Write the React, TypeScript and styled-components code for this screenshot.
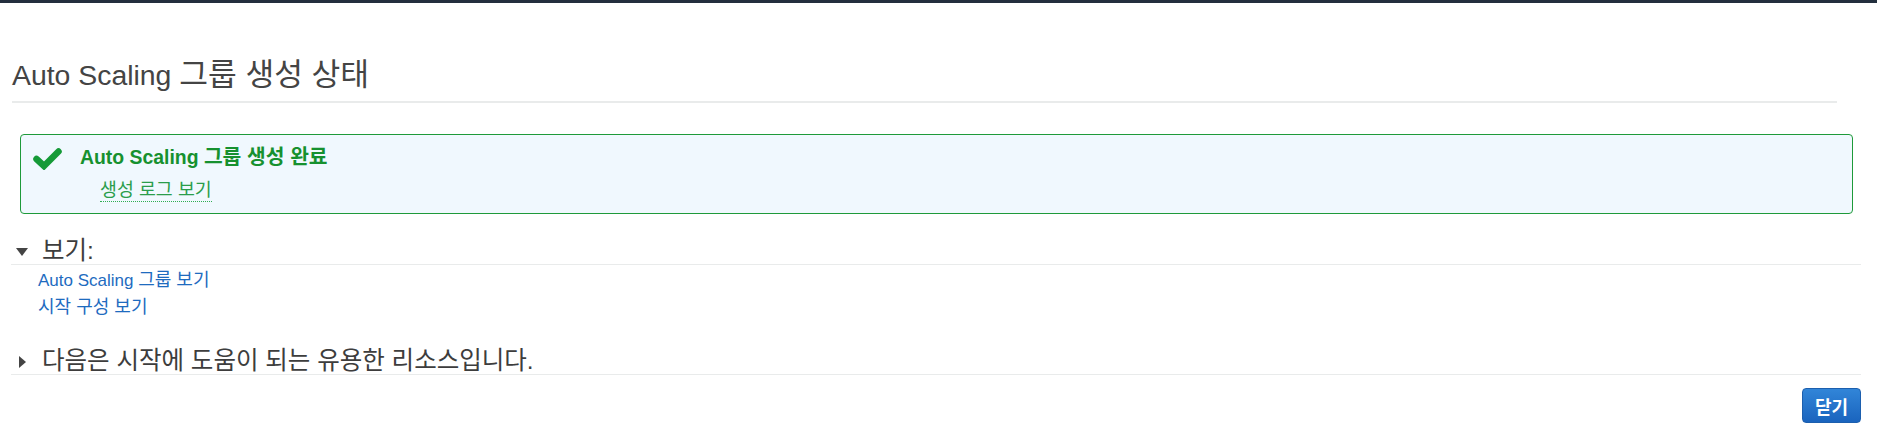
import React from "react";
import styled, { createGlobalStyle } from "styled-components";

const GlobalStyle = createGlobalStyle`
  body {
    margin: 0;
    background: #ffffff;
    font-family: "Liberation Sans", "Noto Sans CJK KR", sans-serif;
    color: #444444;
  }
`;

const CheckIcon = () => (
  <svg width="29" height="23" viewBox="0 0 29 23">
    <path
      d="M3.5 12 L11 19 L25.5 4.5"
      fill="none"
      stroke="#159a37"
      strokeWidth="6.5"
      strokeLinecap="round"
      strokeLinejoin="miter"
    />
  </svg>
);

const App = () => {
  return (
    <>
      <GlobalStyle />
      <TopBar />
      <Page>
        <Title>
          Auto Scaling <Hangul $scale={1.1}>그룹 생성 상태</Hangul>
        </Title>

        <Alert>
          <IconBox>
            <CheckIcon />
          </IconBox>
          <AlertBody>
            <AlertTitle>
              Auto Scaling <Hangul $scale={1.05}>그룹 생성 완료</Hangul>
            </AlertTitle>
            <LogRow>
              <LogLink href="#">생성 로그 보기</LogLink>
            </LogRow>
          </AlertBody>
        </Alert>

        <SectionHeader $gap={24}>
          <Arrow>
            <Caret $open />
          </Arrow>
          보기:
        </SectionHeader>
        <LinkList>
          <ViewLink href="#">
            Auto Scaling <Hangul $scale={1.06}>그룹 보기</Hangul>
          </ViewLink>
          <ViewLink href="#">
            <Hangul $scale={1.06}>시작 구성 보기</Hangul>
          </ViewLink>
        </LinkList>

        <SectionHeader $gap={27}>
          <Arrow>
            <Caret />
          </Arrow>
          다음은 시작에 도움이 되는 유용한 리소스입니다.
        </SectionHeader>

        <Footer>
          <CloseButton type="button">닫기</CloseButton>
        </Footer>
      </Page>
    </>
  );
};

const TopBar = styled.div`
  height: 3px;
  background-color: #232f3e;
`;

const Page = styled.div`
  padding: 0 16px 0 11px;
`;

const Hangul = styled.span<{ $scale: number }>`
  font-size: ${(p) => p.$scale}em;
`;

const Title = styled.h1`
  margin: 0 24px 0 1px;
  padding: 55px 0 9px;
  font-size: 28.4px;
  line-height: 34px;
  font-weight: normal;
  color: #444444;
  border-bottom: 2px solid #e9ebeb;
`;

const Alert = styled.div`
  display: flex;
  margin: 31px 8px 0 9px;
  padding: 10px 12px 11px;
  border: 1px solid #1e9a3a;
  border-radius: 4px;
  background-color: #f0f8fe;
`;

const IconBox = styled.div`
  width: 29px;
  margin: 2px 18px 0 0;
  flex-shrink: 0;
`;

const AlertBody = styled.div`
  display: flex;
  flex-direction: column;
`;

const AlertTitle = styled.div`
  font-size: 19.4px;
  line-height: 24px;
  font-weight: bold;
  color: #16912f;
`;

const LogRow = styled.div`
  margin-top: 10px;
  padding-left: 20px;
`;

const LogLink = styled.a`
  display: inline-block;
  font-size: 18.4px;
  line-height: 21px;
  padding-bottom: 1px;
  color: #2a9d4b;
  text-decoration: none;
  border-bottom: 1px dotted #2fae52;
`;

const SectionHeader = styled.div<{ $gap: number }>`
  display: flex;
  align-items: center;
  margin-top: ${(p) => p.$gap}px;
  padding-left: 5px;
  font-size: 24.5px;
  line-height: 26px;
  color: #3d3d3d;
  border-bottom: 1px solid #e9ebeb;
`;

const Arrow = styled.span`
  display: flex;
  align-items: center;
  justify-content: center;
  width: 12px;
  height: 26px;
  margin-right: 14px;
`;

const Caret = styled.span<{ $open?: boolean }>`
  width: 0;
  height: 0;
  ${(p) =>
    p.$open
      ? `
    border-left: 6px solid transparent;
    border-right: 6px solid transparent;
    border-top: 8px solid #444444;
    margin-top: 2px;
  `
      : `
    border-top: 6px solid transparent;
    border-bottom: 6px solid transparent;
    border-left: 7px solid #444444;
    margin-top: 1px;
  `}
`;

const LinkList = styled.div`
  display: flex;
  flex-direction: column;
  align-items: flex-start;
  margin-left: 27px;
  padding-top: 2px;
`;

const ViewLink = styled.a`
  font-size: 17px;
  line-height: 26px;
  color: #1e6bbf;
  text-decoration: none;
`;

const Footer = styled.div`
  display: flex;
  justify-content: flex-end;
  padding-top: 13px;
`;

const CloseButton = styled.button`
  height: 35px;
  padding: 0 12px;
  border: 1px solid #1c5fae;
  border-radius: 4px;
  background: linear-gradient(#3185d8, #1a64be);
  color: #ffffff;
  font-family: "Liberation Sans", "Noto Sans CJK KR", sans-serif;
  font-size: 18px;
  font-weight: bold;
  cursor: pointer;
`;

export default App;
